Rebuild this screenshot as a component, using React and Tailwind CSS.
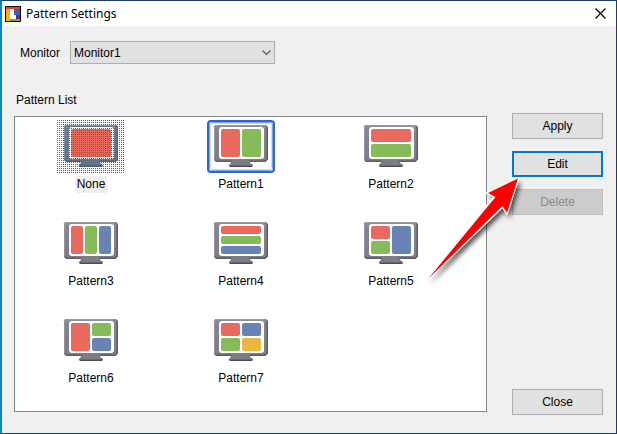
import React from "react";

const RED = "#ea695e";
const GREEN = "#86bb59";
const BLUE = "#6983b4";
const YELLOW = "#e9b744";

// Each tile is [x, y, width, height, colour] on the 54 x 42 monitor drawing.
const patterns = [
  { name: "None", tiles: [[7, 4, 40, 28, RED]] },
  { name: "Pattern1", tiles: [[7, 4, 19, 28, RED], [28, 4, 19, 28, GREEN]] },
  { name: "Pattern2", tiles: [[7, 4, 40, 13, RED], [7, 19, 40, 13, GREEN]] },
  {
    name: "Pattern3",
    tiles: [[7, 4, 12, 28, RED], [21, 4, 12, 28, GREEN], [35, 4, 12, 28, BLUE]],
  },
  {
    name: "Pattern4",
    tiles: [[7, 4, 40, 8, RED], [7, 14, 40, 8, GREEN], [7, 24, 40, 8, BLUE]],
  },
  {
    name: "Pattern5",
    tiles: [[7, 4, 19, 13, RED], [7, 19, 19, 13, GREEN], [28, 4, 19, 28, BLUE]],
  },
  {
    name: "Pattern6",
    tiles: [[7, 4, 19, 28, RED], [28, 4, 19, 13, GREEN], [28, 19, 19, 13, BLUE]],
  },
  {
    name: "Pattern7",
    tiles: [
      [7, 4, 19, 13, RED],
      [28, 4, 19, 13, BLUE],
      [7, 19, 19, 13, GREEN],
      [28, 19, 19, 13, YELLOW],
    ],
  },
];

function MonitorIcon({ tiles, dithered, framed }) {
  return (
    <svg width="68" height="53" viewBox="0 0 68 53" aria-hidden="true">
      <defs>
        <linearGradient id="case" x1="0" y1="0" x2="0" y2="1">
          <stop offset="0" stopColor="#92919c" />
          <stop offset="0.15" stopColor="#85848f" />
          <stop offset="1" stopColor="#7d7c87" />
        </linearGradient>
        <pattern id="dither" width="2" height="2" patternUnits="userSpaceOnUse">
          <rect width="1" height="1" fill="#0078d7" shapeRendering="crispEdges" />
        </pattern>
      </defs>
      {framed && (
        <>
          <rect x="1" y="1" width="66" height="51" rx="3" fill="#fff" stroke="#2f66c8" strokeWidth="2" />
          <rect x="2.5" y="2.5" width="63" height="48" rx="2" fill="none" stroke="#7ba4ea" />
          <rect x="3.5" y="3.5" width="61" height="46" rx="2" fill="none" stroke="#cfdffa" />
        </>
      )}
      <g transform="translate(7 5)">
        <path d="M1.500 0h50.500l2 2v32.500L51.500 37H2l-2-2V1.500z" fill="#5f5c66" />
        <path d="M1.500 0h50l1 1v33l-1.500 1.500H1.500L0 34V1.500z" fill="url(#case)" />
        <path d="M.5 34V2L2 .5h49" fill="none" stroke="#a09fa9" strokeOpacity="0.6" />
        <path d="M17 36h19v2l3 2v1l-1 1H16l-1-1v-1l2-2z" fill="#6a6771" />
        <path d="M17 35h18v2l2 3H16l2-3z" fill="#7d7c87" />
        <path d="M16 41.500h22" stroke="#4d4a53" />
        {dithered && (
          <path
            d="M1.500 0h50.500l2 2v32.500L51.500 37H37l2 3v2H15v-2l2-3H2l-2-2V1.500z"
            fill="#0078d7"
            fillOpacity="0.15"
          />
        )}
        <rect x="5" y="2" width="45" height="32" rx="3" fill="#fff" />
        {tiles.map(([x, y, w, h, color]) => (
          <rect key={`${x}-${y}`} x={x} y={y} width={w} height={h} rx="2" fill={color} />
        ))}
      </g>
      {dithered && <rect width="68" height="53" fill="url(#dither)" />}
    </svg>
  );
}

function PatternItem({ name, tiles }) {
  const current = name === "None";
  return (
    <button
      type="button"
      role="option"
      aria-selected={current}
      className="flex flex-col items-center gap-[3px] self-start justify-self-center"
    >
      <MonitorIcon tiles={tiles} dithered={current} framed={name === "Pattern1"} />
      <span className={current ? "bg-[#f0f0f0] px-[2px] leading-[17px]" : "px-[2px] leading-[17px]"}>
        {name}
      </span>
    </button>
  );
}

function ActionButton({ children, className = "border border-[#adadad] bg-[#e1e1e1]", ...rest }) {
  return (
    <button type="button" className={`h-[26px] w-full ${className}`} {...rest}>
      {children}
    </button>
  );
}

function TitleBar() {
  return (
    <header className="flex h-[25px] items-center bg-white pr-[10px] pl-[3px]">
      <svg width="16" height="16" viewBox="0 0 16 16" aria-hidden="true" shapeRendering="crispEdges">
        <rect width="16" height="16" fill="#120a08" />
        <rect x="1" y="1" width="14" height="2" fill="#f03a22" />
        <rect x="1" y="3" width="4" height="12" fill="#f9ae0d" />
        <rect x="5" y="3" width="6" height="10" fill="#fff" />
        <rect x="9" y="3" width="6" height="6" fill="#3f5fb5" />
        <rect x="11" y="9" width="4" height="4" fill="#7d1b88" />
        <rect x="5" y="13" width="10" height="2" fill="#62b32e" />
      </svg>
      <h1 className="ml-[5px] flex-1 font-['Noto_Sans','Open_Sans',sans-serif] text-[12px] leading-4">
        Pattern Settings
      </h1>
      <button type="button" aria-label="Close window">
        <svg width="11" height="11" viewBox="0 0 11 11" aria-hidden="true">
          <path d="M.5.5l10 10M10.5.5l-10 10" stroke="#000" strokeWidth="1.2" />
        </svg>
      </button>
    </header>
  );
}

function PointerArrow() {
  return (
    <svg
      width="110"
      height="120"
      viewBox="0 0 110 120"
      aria-hidden="true"
      className="pointer-events-none absolute top-[171px] right-[86px]"
    >
      <defs>
        <filter id="soft" x="-20%" y="-20%" width="140%" height="140%">
          <feGaussianBlur stdDeviation="2.5" />
        </filter>
      </defs>
      <path
        d="M99 5L67 20l7 4L7 108 83 34l5 7z"
        fill="#000"
        fillOpacity="0.7"
        filter="url(#soft)"
        transform="translate(2 5)"
      />
      <path
        d="M98.500 6L67 21l7 4L7 108 82.500 35l4.500 7z"
        fill="#fff"
        stroke="#fff"
        strokeWidth="2"
        strokeLinejoin="round"
      />
      <path d="M98 6.500L68 21l7.500 4L8 107 82.500 34l4.500 7z" fill="#fe0000" />
    </svg>
  );
}

export default function App() {
  return (
    <div className="relative flex min-h-screen flex-col border border-l-2 border-[#1b3f68] border-l-[#0a84c9] bg-[#f0f0f0] font-['Liberation_Sans',Arial,sans-serif] text-[12px] leading-4 text-black">
      <TitleBar />
      <main className="flex flex-1 flex-col pt-[15px] pr-[13px] pb-[18px] pl-3">
        <div className="flex items-center pl-[6px]">
          <label htmlFor="monitor" className="w-[50px]">
            Monitor
          </label>
          <div className="relative">
            <select
              id="monitor"
              className="block h-[23px] w-[205px] appearance-none border border-[#adadad] bg-[#e1e1e1] pr-6 pl-[3px]"
            >
              <option>Monitor1</option>
            </select>
            <svg
              width="9"
              height="6"
              viewBox="0 0 9 6"
              aria-hidden="true"
              className="pointer-events-none absolute top-[9px] right-[4px]"
            >
              <path d="M.5.5l4 4 4-4" fill="none" stroke="#555" strokeWidth="1.200" />
            </svg>
          </div>
        </div>
        <div className="mt-7 flex flex-1 gap-[25px]">
          <section className="flex flex-1 flex-col pb-[3px]">
            <h2 id="list-title" className="ml-[2px]">
              Pattern List
            </h2>
            <div
              role="listbox"
              aria-labelledby="list-title"
              className="mt-2 grid flex-1 auto-rows-[97px] grid-cols-[repeat(auto-fill,150px)] content-start border border-[#828790] bg-white pt-[3px] pl-px"
            >
              {patterns.map((p) => (
                <PatternItem key={p.name} {...p} />
              ))}
            </div>
          </section>
          <aside className="flex w-[91px] flex-col gap-3 pt-[21px]">
            <ActionButton>Apply</ActionButton>
            <ActionButton className="border-2 border-[#0078d7] bg-[#e1e1e1]">Edit</ActionButton>
            <ActionButton className="border border-[#bfbfbf] bg-[#cccccc] text-[#8b8b8b]" disabled>
              Delete
            </ActionButton>
            <div className="mt-auto">
              <ActionButton>Close</ActionButton>
            </div>
          </aside>
        </div>
      </main>
      <PointerArrow />
    </div>
  );
}
